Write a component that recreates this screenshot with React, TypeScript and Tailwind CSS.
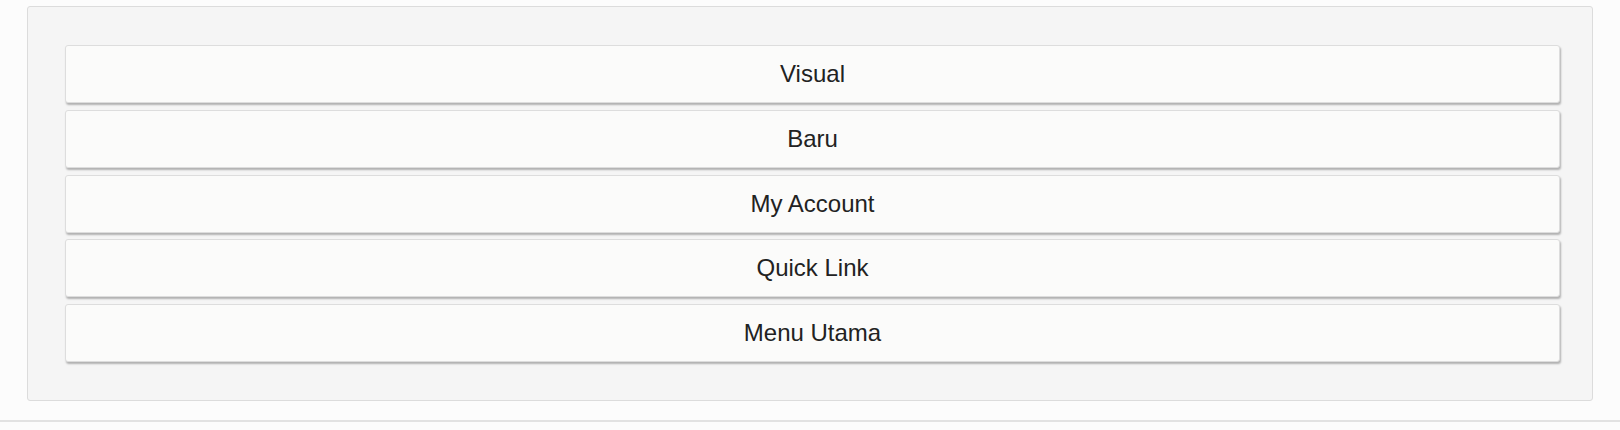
const ITEMS = ["Visual", "Baru", "My Account", "Quick Link", "Menu Utama"];

export default function App() {
  return (
    <div className="h-[430px] w-[1620px] overflow-hidden bg-[#fcfcfc] font-['Liberation_Sans',Arial,sans-serif]">
      <div className="pt-[6px] pl-[27px] pr-[27px]">
        {/* Panel */}
        <div className="rounded-[3px] border border-[#dcdcdc] bg-[#f5f5f5] pt-[38px] pb-[38px] pl-[37px] pr-[32px]">
          <div className="flex flex-col gap-[6.75px]">
            {ITEMS.map((label) => (
              <button
                key={label}
                className="flex h-[58px] w-full items-center justify-center rounded-[3px] border border-[#dddddd] bg-[#fbfbfa] text-[24px] text-[#222222] shadow-[1px_2px_2px_rgba(0,0,0,0.28)]"
              >
                {label}
              </button>
            ))}
          </div>
        </div>
      </div>
      <div className="mt-[19px] h-[2px] w-full bg-[#e2e2e2]" />
    </div>
  );
}
